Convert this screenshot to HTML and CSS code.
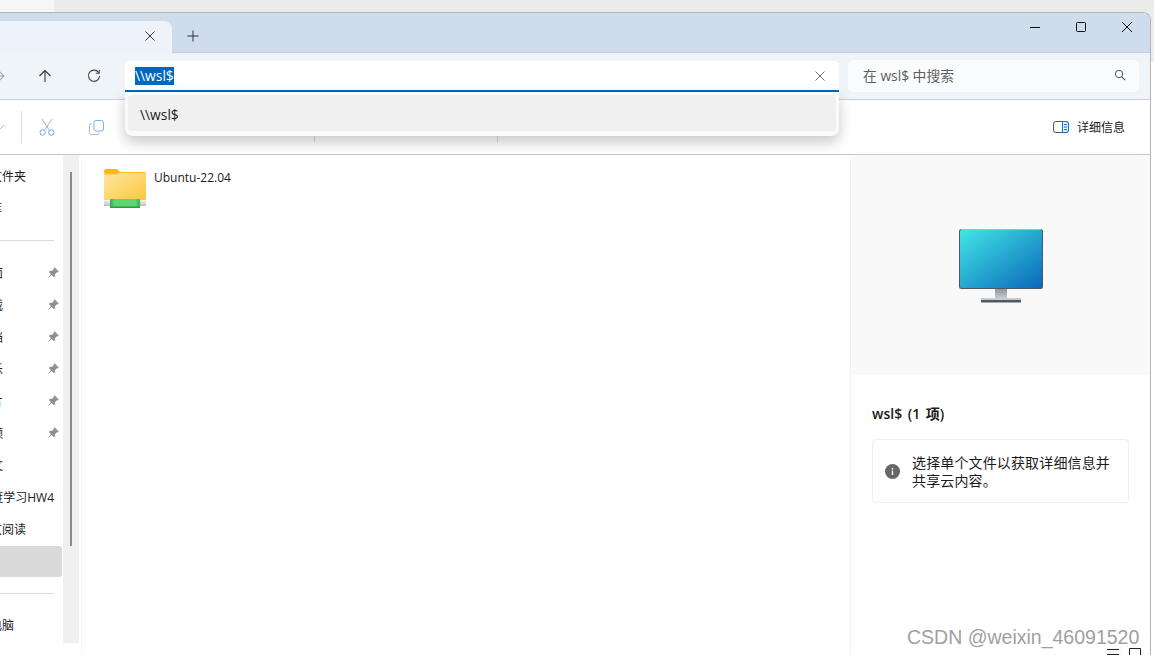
FILE: index.html
```html
<!DOCTYPE html>
<html lang="zh-CN">
<head>
<meta charset="utf-8">
<title>wsl$ - 文件资源管理器</title>
<link rel="stylesheet" href="styles.css">
</head>
<body>
<div class="page">
  <div class="top-strip"><div class="top-strip-left"></div></div>
  <div class="desk">
    <div class="window">
      <header class="titlebar">
        <div class="tab">
          <svg class="tab-close" width="10" height="10" viewBox="0 0 10 10"><path d="M.5.5l9 9M9.5.5l-9 9" stroke="#333" fill="none"/></svg>
        </div>
        <svg class="tab-add" width="12" height="12" viewBox="0 0 12 12"><path d="M6 .5v11M.5 6h11" stroke="#333" fill="none"/></svg>
        <div class="controls">
          <svg class="ctl" width="12" height="12" viewBox="0 0 12 12"><path d="M1 6.500h10" stroke="#111" fill="none"/></svg>
          <svg class="ctl" width="12" height="12" viewBox="0 0 12 12"><rect x="1.500" y="1.500" width="9" height="9" rx="1" stroke="#111" fill="none"/></svg>
          <svg class="ctl" width="12" height="12" viewBox="0 0 12 12"><path d="M1 1l10 10M11 1L1 11" stroke="#111" fill="none"/></svg>
        </div>
      </header>
      <div class="navbar">
        <svg class="nav-fwd" width="14" height="14" viewBox="0 0 14 14"><path d="M1 7h11M7.500 2.500L12 7l-4.500 4.500" stroke="#a4a9af" fill="none" stroke-width="1.100"/></svg>
        <svg class="nav-up" width="14" height="14" viewBox="0 0 14 14"><path d="M7 13V1.500M1.500 7L7 1.500 12.500 7" stroke="#333" fill="none" stroke-width="1.100"/></svg>
        <svg class="nav-refresh" width="14" height="14" viewBox="0 0 14 14"><path d="M11.800 3.800A5.600 5.600 0 1 0 12.600 7" stroke="#444" fill="none" stroke-width="1.100"/><path d="M12.200 .8v3.400H8.800" stroke="#444" fill="none" stroke-width="1.100"/></svg>
        <div class="address">
          <span class="address-text">\\wsl$</span>
          <svg class="address-clear" width="10" height="10" viewBox="0 0 10 10"><path d="M.5.5l9 9M9.500.5l-9 9" stroke="#666" fill="none"/></svg>
          <div class="suggest"><div class="suggest-item">\\wsl$</div></div>
        </div>
        <div class="search">
          <span class="search-text">在 wsl$ 中搜索</span>
          <svg width="12" height="12" viewBox="0 0 12 12"><circle cx="5" cy="5" r="3.700" stroke="#555" fill="none"/><path d="M7.800 7.800l3.400 3.400" stroke="#555" fill="none" stroke-width="1.200"/></svg>
        </div>
      </div>
      <div class="toolbar">
        <svg class="tb-chevron" width="10" height="6" viewBox="0 0 10 6"><path d="M1 1l4 4 4-4" stroke="#b4b4b4" fill="none"/></svg>
        <span class="tb-sep tb-sep-a"></span>
        <svg class="tb-cut" width="16" height="18" viewBox="0 0 16 18"><path d="M3 1l7.500 11.500M13 1L5.500 12.500" stroke="#a9b2bb" fill="none"/><circle cx="3.700" cy="14.500" r="2.700" stroke="#6fa9dc" fill="none"/><circle cx="12.300" cy="14.500" r="2.700" stroke="#6fa9dc" fill="none"/></svg>
        <svg class="tb-copy" width="15" height="15" viewBox="0 0 15 15"><rect x="5" y=".5" width="9.500" height="10.500" rx="2" stroke="#79b2e4" fill="none"/><path d="M3 3.500H2.500a2 2 0 0 0-2 2V12.500a2 2 0 0 0 2 2H8a2 2 0 0 0 2-2V12.500" stroke="#b4bac0" fill="none"/></svg>
        <span class="tb-sep tb-sep-b"></span>
        <span class="tb-sep tb-sep-c"></span>
        <button class="details-btn">
          <svg width="16" height="12" viewBox="0 0 16 12"><rect x=".5" y=".5" width="15" height="11" rx="2.500" stroke="#4a5560" fill="none"/><path d="M9.500.5H13A2.500 2.500 0 0 1 15.500 3v6A2.500 2.500 0 0 1 13 11.500H9.500z" fill="#dff0fc" stroke="#0f78d4"/><path d="M11 3.500h3M11 6h3M11 8.500h3" stroke="#0f78d4" fill="none"/></svg>
          <span>详细信息</span>
        </button>
      </div>
      <div class="body">
        <nav class="sidebar">
          <div class="row"><span>主文件夹</span></div>
          <div class="row"><span>图库</span></div>
          <div class="divider"></div>
          <div class="row pinned"><span>桌面</span><svg class="pin" width="11" height="11" viewBox="0 0 11 11"><path d="M6.600.3L10.700 4.400 9.700 5.400 8.900 5.200 7 7.200 7.200 9 6 10.200 3.700 7.900.7 10.700.3 10.300 3.100 7.300.8 5 2 3.800 3.800 4 5.800 2.100 5.600 1.300z" fill="#8a939b"/></svg></div>
          <div class="row pinned"><span>下载</span><svg class="pin" width="11" height="11" viewBox="0 0 11 11"><path d="M6.600.3L10.700 4.400 9.700 5.400 8.900 5.200 7 7.200 7.200 9 6 10.200 3.700 7.900.7 10.700.3 10.300 3.100 7.300.8 5 2 3.800 3.800 4 5.800 2.100 5.600 1.300z" fill="#8a939b"/></svg></div>
          <div class="row pinned"><span>文档</span><svg class="pin" width="11" height="11" viewBox="0 0 11 11"><path d="M6.600.3L10.700 4.400 9.700 5.400 8.900 5.200 7 7.200 7.200 9 6 10.200 3.700 7.900.7 10.700.3 10.300 3.100 7.300.8 5 2 3.800 3.800 4 5.800 2.100 5.600 1.300z" fill="#8a939b"/></svg></div>
          <div class="row pinned"><span>音乐</span><svg class="pin" width="11" height="11" viewBox="0 0 11 11"><path d="M6.600.3L10.700 4.400 9.700 5.400 8.900 5.200 7 7.200 7.200 9 6 10.200 3.700 7.900.7 10.700.3 10.300 3.100 7.300.8 5 2 3.800 3.800 4 5.800 2.100 5.600 1.300z" fill="#8a939b"/></svg></div>
          <div class="row pinned"><span>图片</span><svg class="pin" width="11" height="11" viewBox="0 0 11 11"><path d="M6.600.3L10.700 4.400 9.700 5.400 8.900 5.200 7 7.200 7.200 9 6 10.200 3.700 7.900.7 10.700.3 10.300 3.100 7.300.8 5 2 3.800 3.800 4 5.800 2.100 5.600 1.300z" fill="#8a939b"/></svg></div>
          <div class="row pinned"><span>视频</span><svg class="pin" width="11" height="11" viewBox="0 0 11 11"><path d="M6.600.3L10.700 4.400 9.700 5.400 8.900 5.200 7 7.200 7.200 9 6 10.200 3.700 7.900.7 10.700.3 10.300 3.100 7.300.8 5 2 3.800 3.800 4 5.800 2.100 5.600 1.300z" fill="#8a939b"/></svg></div>
          <div class="row narrow"><span>论文</span></div>
          <div class="row wide"><span>深度学习HW4</span></div>
          <div class="row wide-b"><span>论文阅读</span></div>
          <div class="row selected"></div>
          <div class="divider"></div>
          <div class="row wide-c"><span>此电脑</span></div>
        </nav>
        <div class="track"><div class="thumb"></div></div>
        <main class="content">
          <div class="item">
            <svg class="folder" width="43" height="40" viewBox="0 0 43 40">
              <defs>
                <linearGradient id="fg" x1="0" y1="0" x2="1" y2="1"><stop offset="0" stop-color="#fee6a2"/><stop offset="1" stop-color="#fcc63a"/></linearGradient>
                <linearGradient id="gg" x1="0" y1="0" x2="1" y2="0"><stop offset="0" stop-color="#2fae4b"/><stop offset=".15" stop-color="#5fd36f"/><stop offset=".85" stop-color="#5fd36f"/><stop offset="1" stop-color="#2fae4b"/></linearGradient>
                <linearGradient id="bg" x1="0" y1="0" x2="0" y2="1"><stop offset="0" stop-color="#f5f5f5"/><stop offset="1" stop-color="#bdbdbd"/></linearGradient>
              </defs>
              <path d="M0 2a2 2 0 0 1 2-2h11l4 4h-17z" fill="#fbb713"/>
              <path d="M0 5.500a1.500 1.500 0 0 1 1.500-1.500h10l4-1h25.500a1 1 0 0 1 1 1V32H0z" fill="#f9bc2c"/>
              <path d="M0 6.500a1 1 0 0 1 1-1h11l4-1.500h25a1 1 0 0 1 1 1V32H0z" fill="url(#fg)"/>
              <rect x="0" y="31" width="42" height="6" fill="url(#bg)"/>
              <rect x="6" y="30" width="30" height="9" rx="1" fill="url(#gg)"/>
              <rect x="6" y="37.500" width="30" height="1.500" fill="#2a9c42"/>
            </svg>
            <span class="item-name">Ubuntu-22.04</span>
          </div>
        </main>
        <aside class="pane">
          <div class="preview">
            <svg width="86" height="75" viewBox="0 0 86 75">
              <defs>
                <linearGradient id="mg" x1="0" y1="0" x2="1" y2="1"><stop offset="0" stop-color="#41e6e6"/><stop offset="1" stop-color="#0a68ba"/></linearGradient>
                <linearGradient id="sg" x1="0" y1="0" x2="0" y2="1"><stop offset="0" stop-color="#8e979f"/><stop offset="1" stop-color="#c3c9ce"/></linearGradient>
              </defs>
              <rect x="1" y="1" width="84" height="60" rx="2.500" fill="#4d5a66"/>
              <rect x="3" y="1" width="80" height="1" fill="#aeb7bf"/>
              <rect x="2" y="2" width="82" height="58" rx="1.500" fill="url(#mg)"/>
              <rect x="37" y="61" width="12" height="9" fill="url(#sg)"/>
              <rect x="23" y="70" width="40" height="2" fill="#c4cbd1"/>
              <rect x="23" y="72" width="40" height="2.500" fill="#4f5961"/>
            </svg>
          </div>
          <div class="info">
            <h2 class="info-title">wsl$ (1 项)</h2>
            <div class="card">
              <svg class="card-icon" width="15" height="15" viewBox="0 0 15 15"><circle cx="7.500" cy="7.500" r="7.500" fill="#666"/><rect x="6.800" y="6.500" width="1.400" height="4.500" fill="#fff"/><rect x="6.800" y="4" width="1.400" height="1.500" fill="#fff"/></svg>
              <p class="card-text">选择单个文件以获取详细信息并共享云内容。</p>
            </div>
          </div>
        </aside>
      </div>
    </div>
    <div class="gutter"></div>
  </div>
  <div class="watermark">CSDN @weixin_46091520</div>
  <svg class="corner-icons" width="36" height="8" viewBox="0 0 36 8"><rect x="0" y="0" width="16" height="8" fill="#f6f6f6"/><path d="M2 1.500h12M2 6.500h12" stroke="#222" fill="none"/><path d="M24.500 8V.5h11V8" stroke="#222" fill="none"/></svg>
</div>
</body>
</html>
```
FILE: styles.css
```css
* { box-sizing: border-box; }
html, body { margin: 0; padding: 0; height: 100%; overflow: hidden; background: #fff; }
body { font-family: "Open Sans", "Noto Sans CJK SC", sans-serif; font-size: 13px; color: #1a1a1a; }
svg { display: block; flex: none; }

.page { position: relative; width: 1154px; height: 655px; display: flex; flex-direction: column; overflow: hidden; }
.top-strip { height: 12px; background: #ebebeb; flex: none; }
.top-strip-left { width: 54px; height: 100%; background: #f6f6f6; }
.desk { flex: 1; display: flex; min-height: 0; background: #ececec; }
.gutter { width: 3px; background: linear-gradient(#ececec 50px, #fff 50px); }

.window { flex: 1; min-width: 0; display: flex; flex-direction: column; background: #fff; border-top: 1px solid #b4b4b4; border-right: 1px solid #b4b4b4; border-top-right-radius: 8px; overflow: hidden; }

.titlebar { height: 40px; flex: none; background: #cedceb; display: flex; align-items: flex-end; border-bottom: 1px solid #c3cfdc; }
.tab { width: 172px; height: 32px; background: #eef3f9; border-top-right-radius: 8px; display: flex; align-items: center; justify-content: flex-end; padding-right: 17px; margin-bottom: -1px; padding-bottom: 3px; }
.tab-add { margin: 0 0 10px 15px; }
.controls { margin-left: auto; align-self: flex-start; display: flex; gap: 34px; padding: 8px 17px 0 0; }

.navbar { height: 47px; flex: none; background: #eff4f9; border-bottom: 1px solid #c8d2de; display: flex; align-items: center; }
.nav-fwd { margin-left: -8px; }
.nav-up { margin-left: 32px; }
.nav-refresh { margin-left: 35px; }
.address { position: relative; margin-left: 24px; width: 714px; height: 31px; margin-top: 1px; background: #fff; border-bottom: 2px solid #0067c0; border-radius: 4px 4px 0 0; display: flex; align-items: center; padding: 0 14px 0 10px; justify-content: space-between; font-size: 13.800px; }
.address-text { background: #0067c0; color: #fff; line-height: 18px; }
.suggest { position: absolute; left: 0; right: 0; top: 31px; height: 44px; padding: 3px; background: #fafafa; border-radius: 0 0 8px 8px; box-shadow: 0 6px 14px rgba(0,0,0,.22); z-index: 3; }
.suggest-item { height: 36px; background: #f0f0f0; border-radius: 4px; display: flex; align-items: center; padding: 3px 0 0 12px; }
.search { margin-left: 9px; width: 291px; height: 32px; background: #fafbfd; border-radius: 5px; display: flex; align-items: center; justify-content: space-between; padding: 0 13px 2px 15px; font-size: 13.800px; color: #5e5e5e; }

.toolbar { height: 55px; flex: none; background: #fff; border-bottom: 1px solid #b9cbdf; display: flex; align-items: center; padding-right: 25px; }
.tb-chevron { margin-left: -5px; }
.tb-sep { width: 1px; height: 32px; background: #dcdcdc; flex: none; }
.tb-sep-a { margin-left: 16px; }
.tb-cut { margin-left: 17px; }
.tb-copy { margin-left: 34px; }
.tb-sep-b { margin-left: 210px; }
.tb-sep-c { margin-left: 182px; }
.details-btn { margin-left: auto; display: flex; align-items: center; gap: 8px; border: 0; padding: 0; background: none; font: inherit; font-size: 12px; color: #1a1a1a; }

.body { flex: 1; min-height: 0; display: flex; }
.sidebar { width: 63px; flex: none; padding-top: 5px; overflow: hidden; font-size: 12px; }
.row { height: 32px; display: flex; align-items: center; justify-content: flex-end; padding-right: 37px; white-space: nowrap; position: relative; }
.row:nth-child(2) { padding-right: 61px; }
.row.pinned, .row.narrow { padding-right: 60px; }
.row.wide { padding-right: 9px; }
.row.wide-b { padding-right: 37px; }
.row.wide-c { padding-right: 49px; }
.pin { position: absolute; left: 48px; top: 10px; }
.selected { height: 31px; margin-top: 1px; padding: 0; margin-right: 1px; background: #d9d9d9; border-radius: 0 3px 3px 0; }
.divider { height: 33px; display: flex; align-items: center; }
.divider::before { content: ""; display: block; width: 54px; height: 1px; background: #d9d9d9; }
.selected + .divider { height: 32px; }

.track { width: 16px; height: 488px; flex: none; background: #f0f0f0; padding: 17px 0 0 7px; }
.thumb { width: 2px; height: 374px; background: #8c8c8c; }

.content { flex: 1; min-width: 0; border-left: 1px solid #f4f4f4; margin-left: 2px; padding: 14px 0 0 22px; }
.item { display: flex; align-items: flex-start; gap: 7px; }
.item-name { font-size: 12px; line-height: 16px; margin-top: 1px; }

.pane { width: 300px; flex: none; border-left: 1px solid #f2f2f2; padding-left: 1px; }
.preview { height: 220px; background: #f9f9f9; display: flex; justify-content: center; align-items: flex-start; padding: 73px 0 0 0; }
.info { padding: 29px 21px 0 20px; }
.info-title { margin: 0; font-size: 14px; line-height: 20px; font-weight: 600; color: #1a1a1a; word-spacing: 2px; }
.card { margin-top: 15px; height: 64px; border: 1px solid #eee; border-radius: 4px; display: flex; align-items: center; padding: 0 12px; gap: 12px; }
.card-text { margin: 0; padding-top: 2px; font-size: 14px; line-height: 18px; letter-spacing: .14px; }

.watermark { position: absolute; left: 907px; top: 625px; font-family: "Liberation Sans", sans-serif; font-size: 19.500px; line-height: 24px; color: #a0a0a0; text-shadow: 0 0 2px #fff; white-space: nowrap; }
.corner-icons { position: absolute; left: 1105px; top: 648px; }
```
